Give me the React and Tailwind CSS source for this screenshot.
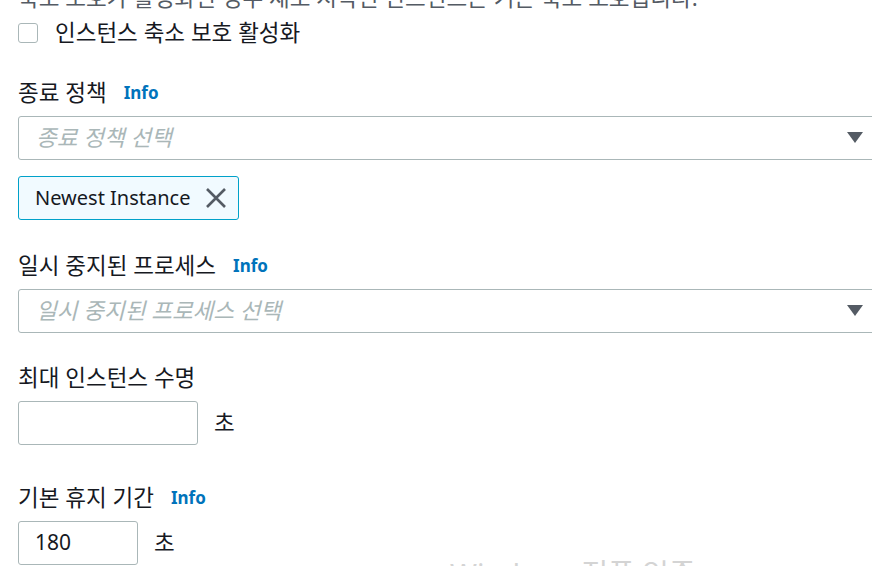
const FONT = { fontFamily: '"Noto Sans", "Noto Sans CJK KR", sans-serif' }

function Label({ text, info, className }) {
  return (
    <div className={`flex items-center h-[28px] gap-[17px] ${className}`}>
      <span className="text-[22.5px] text-[#16191f]">{text}</span>
      {info && <span className="text-[17px] font-bold text-[#0073bb]">Info</span>}
    </div>
  )
}

function Select({ placeholder, className }) {
  return (
    <div className={`flex items-center justify-between w-[880px] h-[44px] border border-[#aab7b8] rounded-[3px] pl-[17px] pr-[34px] ${className}`}>
      <span className="text-[22.5px] italic text-[#aab7b8]">{placeholder}</span>
      <svg width="16" height="12" viewBox="0 0 16 12">
        <path d="M0 0 L16 0 L8 11 Z" fill="#545b64" />
      </svg>
    </div>
  )
}

export default function App() {
  return (
    <div className="relative w-[872px] h-[566px] overflow-hidden bg-white" style={FONT}>
      <div className="pl-[18px]">
        <div className="mt-[-16px] h-[28px] flex items-center text-[22.5px] text-[#545b64] whitespace-nowrap">
          축소 보호가 활성화된 경우 새로 시작된 인스턴스는 기본 축소 보호됩니다.
        </div>

        {/* Scale-in protection */}
        <div className="mt-[7px] h-[28px] flex items-center gap-[17px]">
          <div className="w-[20px] h-[20px] border-[1.5px] border-[#aab7b8] rounded-[3px]" />
          <span className="text-[22.5px] text-[#16191f]">인스턴스 축소 보호 활성화</span>
        </div>

        {/* Termination policy */}
        <Label text="종료 정책" info className="mt-[32px]" />
        <Select placeholder="종료 정책 선택" className="mt-[9px]" />
        <div className="mt-[16px] inline-flex items-center h-[44px] w-[221px] bg-[#f1faff] border border-[#00a1c9] rounded-[3px] pl-[16px] gap-[15px]">
          <span className="text-[20px] text-[#16191f]">Newest Instance</span>
          <svg width="22" height="22" viewBox="0 0 22 22">
            <path d="M2 2 L20 20 M20 2 L2 20" stroke="#545b64" strokeWidth="2.6" fill="none" />
          </svg>
        </div>

        {/* Suspended processes */}
        <Label text="일시 중지된 프로세스" info className="mt-[32px]" />
        <Select placeholder="일시 중지된 프로세스 선택" className="mt-[9px]" />

        {/* Max instance lifetime */}
        <Label text="최대 인스턴스 수명" className="mt-[31px]" />
        <div className="mt-[9px] flex items-center gap-[16px]">
          <div className="w-[180px] h-[44px] border border-[#aab7b8] rounded-[3px]" />
          <span className="text-[22.5px] text-[#16191f]">초</span>
        </div>

        {/* Default cooldown */}
        <Label text="기본 휴지 기간" info className="mt-[39px]" />
        <div className="mt-[9px] flex items-center gap-[16px]">
          <div className="w-[120px] h-[44px] border border-[#aab7b8] rounded-[3px] flex items-center pl-[16px]">
            <span className="text-[21px] text-[#16191f]">180</span>
          </div>
          <span className="text-[22.5px] text-[#16191f]">초</span>
        </div>
      </div>

      {/* Windows watermark */}
      <div className="absolute left-[450px] top-[559px] text-[29px] leading-none text-[#d4d4d4] whitespace-nowrap">
        Windows 정품 인증
      </div>
    </div>
  )
}
